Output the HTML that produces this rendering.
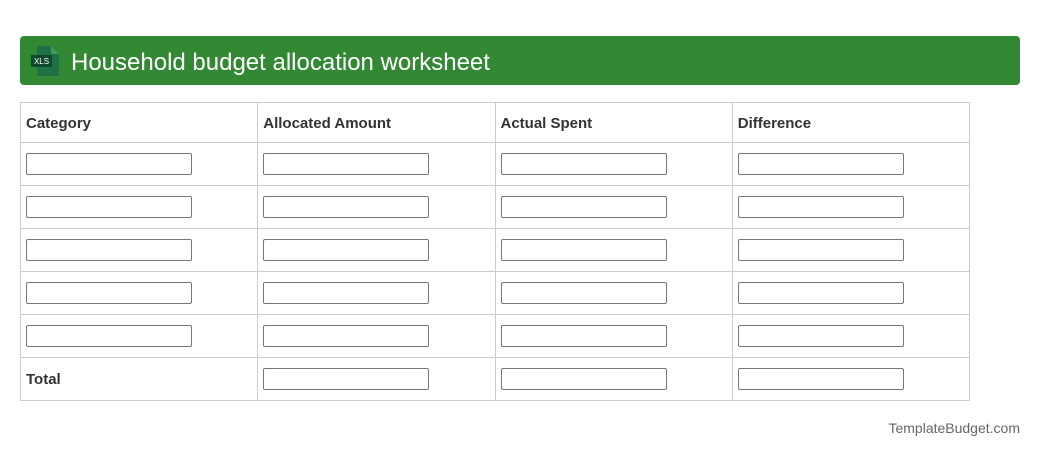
<!DOCTYPE html>
<html><head><meta charset="utf-8"><style>
body{margin:0;background:#fff;font-family:"Liberation Sans",sans-serif;width:1040px;height:458px;position:relative;overflow:hidden}
.hdr{position:absolute;left:20px;top:36px;width:1000px;height:49px;background:#338833;border-radius:4px}
.hdr .t{position:absolute;left:51px;top:12px;font-size:24px;color:#fff;line-height:30px}
.hdr svg{position:absolute;left:11px;top:10px}
table{position:absolute;left:20px;top:102px;border-collapse:collapse;width:950px}
td{border:1px solid #ccc;width:237px;height:43px;padding:0 0 0 5px;box-sizing:border-box;font-size:15px;font-weight:bold;color:#333;vertical-align:middle}
tr:first-child td{height:40px;padding-top:1px}
.i{display:block;width:166px;height:22px;border:1px solid #767676;border-radius:2px;box-sizing:border-box}
.f{position:absolute;right:20px;top:420px;font-size:14px;color:#666}
</style></head><body>
<div class="hdr">
<svg width="30" height="31" viewBox="0 0 30 31"><path d="M6 0H20L28 8V30H6Z" fill="#1e7145"/><path d="M20 0V8H28Z" fill="#3a9a60"/><rect x="0" y="9" width="21" height="12" fill="#0f4a2a"/><text x="10.5" y="18" font-size="8" fill="#fff" text-anchor="middle" font-family="Liberation Sans">XLS</text></svg>
<div class="t">Household budget allocation worksheet</div>
</div>
<table>
<tr><td>Category</td><td>Allocated Amount</td><td>Actual Spent</td><td>Difference</td></tr>
<tr><td><span class="i"></span></td><td><span class="i"></span></td><td><span class="i"></span></td><td><span class="i"></span></td></tr>
<tr><td><span class="i"></span></td><td><span class="i"></span></td><td><span class="i"></span></td><td><span class="i"></span></td></tr>
<tr><td><span class="i"></span></td><td><span class="i"></span></td><td><span class="i"></span></td><td><span class="i"></span></td></tr>
<tr><td><span class="i"></span></td><td><span class="i"></span></td><td><span class="i"></span></td><td><span class="i"></span></td></tr>
<tr><td><span class="i"></span></td><td><span class="i"></span></td><td><span class="i"></span></td><td><span class="i"></span></td></tr>
<tr><td>Total</td><td><span class="i"></span></td><td><span class="i"></span></td><td><span class="i"></span></td></tr>
</table>
<div class="f">TemplateBudget.com</div>
</body></html>
